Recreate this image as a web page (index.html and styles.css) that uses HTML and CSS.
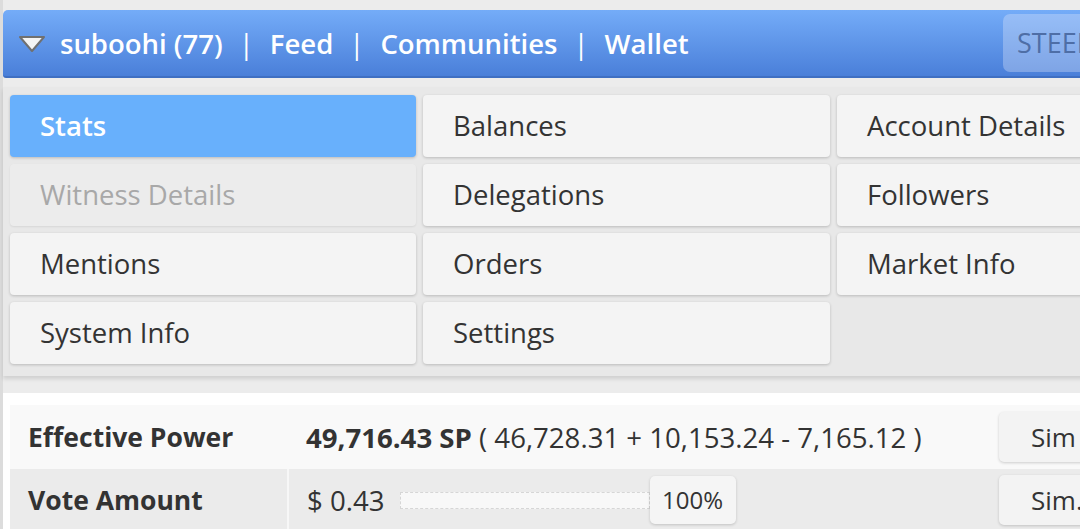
FILE: index.html
```html
<!DOCTYPE html>
<html lang="en">
<head>
    <meta charset="UTF-8">
    <meta name="viewport" content="width=device-width, initial-scale=1.0">
    <title>Steem Account</title>
    <link rel="stylesheet" href="styles.css">
</head>
<body>
    <div class="page">
        <div class="topbar">
            <div class="nav">
                <svg class="caret" width="28" height="18" viewBox="0 0 28 18">
                    <path d="M2 2 L26 2 L14 16 Z" fill="#f4f4f4" stroke="#707070" stroke-width="2" stroke-linejoin="round"/>
                </svg>
                <span>suboohi (77)</span>
                <span class="sep">|</span>
                <span>Feed</span>
                <span class="sep">|</span>
                <span>Communities</span>
                <span class="sep">|</span>
                <span>Wallet</span>
            </div>
            <div class="coin">STEEM</div>
        </div>

        <div class="menu">
            <div class="tab active">Stats</div>
            <div class="tab">Balances</div>
            <div class="tab">Account Details</div>
            <div class="tab disabled">Witness Details</div>
            <div class="tab">Delegations</div>
            <div class="tab">Followers</div>
            <div class="tab">Mentions</div>
            <div class="tab">Orders</div>
            <div class="tab">Market Info</div>
            <div class="tab">System Info</div>
            <div class="tab">Settings</div>
        </div>

        <div class="content">
            <table class="stats">
                <tr class="odd">
                    <th>Effective Power</th>
                    <td><strong>49,716.43 SP</strong> ( 46,728.31 + 10,153.24 - 7,165.12 )</td>
                    <td class="act"><button class="sim">Sim</button></td>
                </tr>
                <tr class="even">
                    <th>Vote Amount</th>
                    <td>
                        <div class="vote">
                            <span>$ 0.43</span>
                            <div class="bar"></div>
                            <div class="pct">100%</div>
                        </div>
                    </td>
                    <td class="act"><button class="sim">Sim.</button></td>
                </tr>
            </table>
        </div>
    </div>
</body>
</html>
```

FILE: styles.css
```css
body {
    margin: 0;
    background-color: #dcdcdc;
    font-family: 'Open Sans', sans-serif;
    color: #333;
    overflow: hidden;
}

.page {
    width: 1100px;
    padding-top: 10px;
    margin-left: 3px;
    background-color: #ececec;
}

.topbar {
    display: flex;
    align-items: center;
    justify-content: space-between;
    height: 68px;
    border-radius: 5px 5px 3px 3px;
    background: linear-gradient(#74acf8, #4a7fd9);
    border-bottom: 2px solid #3f6fc2;
    box-sizing: border-box;
}

.nav {
    display: flex;
    align-items: center;
    padding-left: 15px;
    color: #fff;
    font-size: 27.5px;
    font-weight: 600;
    white-space: pre;
}

.caret {
    margin-right: 14px;
    margin-top: 2px;
}

.sep {
    padding: 0 16px;
    font-weight: 400;
}

.coin {
    width: 120px;
    height: 58px;
    margin-right: -20px;
    padding-left: 14px;
    line-height: 58px;
    border-radius: 7px;
    background-color: rgba(220, 230, 250, 0.35);
    color: #4e6ea6;
    font-size: 27px;
    box-sizing: border-box;
}

.menu {
    display: grid;
    grid-template-columns: 406px 407px 406px;
    gap: 7px 7px;
    margin-top: 9px;
    padding: 8px 7px 12px;
    background-color: #e8e8e8;
    box-shadow: 0 3px 4px rgba(0, 0, 0, 0.12);
}

.tab {
    height: 62px;
    line-height: 62px;
    padding-left: 30px;
    border-radius: 4px;
    background-color: #f4f4f4;
    box-shadow: 0 1px 3px rgba(0, 0, 0, 0.2);
    font-size: 27.5px;
    color: #333;
}

.tab.active {
    background-color: #68b0fc;
    color: #fff;
    font-weight: 600;
}

.tab.disabled {
    background-color: #ececec;
    color: #a8a8a8;
    box-shadow: 0 1px 2px rgba(0, 0, 0, 0.08);
}

.content {
    margin-top: 17px;
    padding: 12px 7px 0;
    background-color: #fff;
}

.stats {
    border-collapse: collapse;
    width: 1090px;
    font-size: 27.6px;
}

.stats th {
    width: 259px;
    padding: 0 0 0 18px;
    text-align: left;
    font-size: 26.5px;
    font-weight: 700;
    color: #333;
}

.stats td {
    padding: 0 0 0 18px;
    white-space: nowrap;
}

.stats tr.odd {
    height: 64px;
    background-color: #f9f9f9;
}

.stats tr.even {
    height: 62px;
    background-color: #ebebeb;
}

.stats tr.even th {
    border-right: 2px solid #f7f7f7;
}

.stats strong {
    font-weight: 700;
}

.stats td.act {
    width: 92px;
    padding: 0;
}

.sim {
    width: 100px;
    height: 50px;
    padding: 0 0 0 32px;
    text-align: left;
    border: none;
    border-radius: 5px;
    background-color: #f3f3f3;
    box-shadow: 0 1px 3px rgba(0, 0, 0, 0.18);
    font-family: 'Open Sans', sans-serif;
    font-size: 26px;
    color: #333;
}

.vote {
    display: flex;
    align-items: center;
}

.bar {
    width: 248px;
    height: 15px;
    margin-left: 15px;
    border: 1px dashed #d6d6d6;
    background-color: #f8f8f8;
}

.pct {
    width: 86px;
    height: 48px;
    line-height: 48px;
    text-align: center;
    border-radius: 5px;
    background-color: #f5f5f5;
    box-shadow: 0 1px 3px rgba(0, 0, 0, 0.18);
    font-size: 24px;
}
```
